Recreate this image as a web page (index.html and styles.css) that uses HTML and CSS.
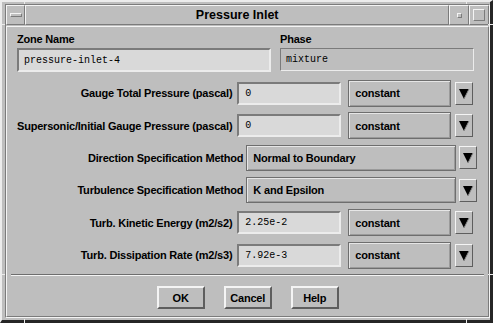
FILE: index.html
```html
<!DOCTYPE html>
<html lang="en">

<head>
    <meta charset="UTF-8">
    <title>Pressure Inlet</title>
    <link rel="stylesheet" href="styles.css">
</head>

<body>
    <div class="window">
        <span class="tick tick-top-l"></span>
        <span class="tick tick-top-r"></span>
        <span class="tick tick-bot-l"></span>
        <span class="tick tick-bot-r"></span>
        <span class="tick tick-left-t"></span>
        <span class="tick tick-left-b"></span>
        <span class="tick tick-right-t"></span>
        <span class="tick tick-right-b"></span>
        <div class="frame">
            <div class="titlebar">
                <div class="tb-btn menu-btn"><span class="menu-bar"></span></div>
                <div class="title">Pressure Inlet</div>
                <div class="tb-btn min-btn"><span class="min-box"></span></div>
                <div class="tb-btn max-btn"><span class="max-box"></span></div>
            </div>
            <div class="client">
                <div class="top-fields">
                    <div class="field zone">
                        <div class="field-label">Zone Name</div>
                        <div class="entry">pressure-inlet-4</div>
                    </div>
                    <div class="field phase">
                        <div class="field-label">Phase</div>
                        <div class="entry flat">mixture</div>
                    </div>
                </div>

                <div class="rows">
                    <div class="row">
                        <span class="row-label">Gauge Total Pressure (pascal)</span>
                        <div class="entry num">0</div>
                        <div class="option">constant</div>
                        <div class="arrow-btn"><svg width="18" height="23" viewBox="0 0 18 23"><polygon points="4,7 14,7 9,17" fill="#000"/><polyline points="14,7 9,17" stroke="#8a8a8a" fill="none"/></svg></div>
                    </div>
                    <div class="row">
                        <span class="row-label">Supersonic/Initial Gauge Pressure (pascal)</span>
                        <div class="entry num">0</div>
                        <div class="option">constant</div>
                        <div class="arrow-btn"><svg width="18" height="23" viewBox="0 0 18 23"><polygon points="4,7 14,7 9,17" fill="#000"/><polyline points="14,7 9,17" stroke="#8a8a8a" fill="none"/></svg></div>
                    </div>
                    <div class="row method">
                        <span class="row-label">Direction Specification Method</span>
                        <div class="option wide">Normal to Boundary</div>
                        <div class="arrow-btn"><svg width="18" height="23" viewBox="0 0 18 23"><polygon points="4,7 14,7 9,17" fill="#000"/><polyline points="14,7 9,17" stroke="#8a8a8a" fill="none"/></svg></div>
                    </div>
                    <div class="row method">
                        <span class="row-label">Turbulence Specification Method</span>
                        <div class="option wide">K and Epsilon</div>
                        <div class="arrow-btn"><svg width="18" height="23" viewBox="0 0 18 23"><polygon points="4,7 14,7 9,17" fill="#000"/><polyline points="14,7 9,17" stroke="#8a8a8a" fill="none"/></svg></div>
                    </div>
                    <div class="row">
                        <span class="row-label">Turb. Kinetic Energy (m2/s2)</span>
                        <div class="entry num">2.25e-2</div>
                        <div class="option">constant</div>
                        <div class="arrow-btn"><svg width="18" height="23" viewBox="0 0 18 23"><polygon points="4,7 14,7 9,17" fill="#000"/><polyline points="14,7 9,17" stroke="#8a8a8a" fill="none"/></svg></div>
                    </div>
                    <div class="row">
                        <span class="row-label">Turb. Dissipation Rate (m2/s3)</span>
                        <div class="entry num">7.92e-3</div>
                        <div class="option">constant</div>
                        <div class="arrow-btn"><svg width="18" height="23" viewBox="0 0 18 23"><polygon points="4,7 14,7 9,17" fill="#000"/><polyline points="14,7 9,17" stroke="#8a8a8a" fill="none"/></svg></div>
                    </div>
                </div>

                <div class="separator"></div>

                <div class="buttons">
                    <button class="push">OK</button>
                    <button class="push">Cancel</button>
                    <button class="push">Help</button>
                </div>
            </div>
        </div>
    </div>
</body>

</html>
```

FILE: styles.css
```css
body {
    margin: 0;
    font-family: "Liberation Sans", Arial, sans-serif;
    background-color: #bebebe;
}

.window {
    position: relative;
    box-sizing: border-box;
    width: 493px;
    height: 323px;
    background-color: #bebebe;
    border-top: 2px solid #ececec;
    border-left: 2px solid #ececec;
    border-right: 3px solid #262626;
    border-bottom: 3px solid #262626;
    padding: 2px 2px 2px 3px;
    display: flex;
}

/* resize corner marks on the frame */
.tick {
    position: absolute;
    background-color: #ececec;
}

.tick-top-l, .tick-top-r, .tick-bot-l, .tick-bot-r {
    width: 1px;
    height: 4px;
}

.tick-left-t, .tick-left-b, .tick-right-t, .tick-right-b {
    width: 5px;
    height: 1px;
}

.tick-top-l { top: -2px; left: 22px; }
.tick-top-r { top: -2px; left: 464px; }
.tick-bot-l { bottom: -3px; left: 22px; }
.tick-bot-r { bottom: -3px; left: 464px; }
.tick-left-t { left: -2px; top: 22px; }
.tick-left-b { left: -2px; top: 272px; }
.tick-right-t { right: -3px; top: 22px; }
.tick-right-b { right: -3px; top: 272px; }

.frame {
    flex: 1;
    display: flex;
    flex-direction: column;
    border: 1px solid;
    border-color: #7b7b7b #f4f4f4 #f4f4f4 #7b7b7b;
}

.titlebar {
    display: flex;
    height: 20px;
}

.tb-btn,
.title {
    box-sizing: border-box;
    border: 1px solid;
    border-color: #f4f4f4 #7b7b7b #7b7b7b #f4f4f4;
    display: flex;
    align-items: center;
    justify-content: center;
}

.menu-btn {
    width: 19px;
}

.menu-bar {
    width: 10px;
    height: 2px;
    border: 1px solid;
    border-color: #f4f4f4 #7b7b7b #7b7b7b #f4f4f4;
}

.title {
    flex: 1;
    font-weight: bold;
    font-size: 12.5px;
    color: #000;
}

.min-btn,
.max-btn {
    width: 20px;
}

.min-box {
    width: 3px;
    height: 3px;
    border: 1px solid;
    border-color: #f4f4f4 #7b7b7b #7b7b7b #f4f4f4;
}

.max-box {
    width: 10px;
    height: 10px;
    border: 1px solid;
    border-color: #f4f4f4 #7b7b7b #7b7b7b #f4f4f4;
}

.client {
    flex: 1;
    margin-top: 1px;
    border: 1px solid;
    border-color: #f4f4f4 #7b7b7b #7b7b7b #f4f4f4;
    display: flex;
    flex-direction: column;
    padding: 6px 0 0 10px;
}

.top-fields {
    display: flex;
    gap: 9px;
}

.field-label {
    font-weight: bold;
    font-size: 11px;
    letter-spacing: -0.2px;
    height: 15px;
    line-height: 13px;
}

.zone {
    width: 254px;
}

.phase {
    width: 194px;
}

.entry {
    box-sizing: border-box;
    height: 24px;
    background-color: #d9d9d9;
    border: 2px solid;
    border-color: #7b7b7b #ececec #ececec #7b7b7b;
    font-family: "Liberation Mono", "DejaVu Sans Mono", monospace;
    font-size: 10px;
    color: #000;
    padding-left: 5px;
    display: flex;
    align-items: center;
}

.entry.flat {
    background-color: #bebebe;
    border-width: 1px;
    height: 23px;
}

.rows {
    margin-top: 5px;
    display: flex;
    flex-direction: column;
}

.row {
    height: 32.4px;
    display: flex;
    align-items: center;
    padding-right: 15px;
}

.row.method {
    padding-right: 11px;
}

.row-label {
    flex: 1;
    text-align: right;
    white-space: nowrap;
    font-weight: bold;
    font-size: 11px;
    letter-spacing: -0.2px;
    padding-right: 5px;
}

.row.method .row-label {
    padding-right: 3px;
}

.entry.num {
    width: 104px;
    height: 23px;
    padding-left: 6px;
}

.option {
    box-sizing: border-box;
    width: 103px;
    height: 27px;
    margin-left: 7px;
    border: 1px solid #6e6e6e;
    box-shadow: inset 1px 1px 0 #e6e6e6, inset -1px -1px 0 #9a9a9a;
    font-weight: bold;
    font-size: 11px;
    letter-spacing: -0.2px;
    padding-left: 6px;
    display: flex;
    align-items: center;
}

.option.wide {
    width: 210px;
    height: 26px;
    margin-left: 0;
}

.arrow-btn {
    box-sizing: border-box;
    width: 18px;
    height: 23px;
    margin-left: 4px;
    border: 1px solid;
    border-color: #f4f4f4 #5e5e5e #5e5e5e #f4f4f4;
    display: flex;
    align-items: center;
    justify-content: center;
}

.row.method .arrow-btn {
    margin-left: 3px;
}

.arrow-btn svg {
    margin: -1px;
}

.separator {
    margin-top: 3px;
    margin-left: -6px;
    margin-right: 4px;
    height: 0;
    border-top: 1px solid #6e6e6e;
    border-bottom: 1px solid #f4f4f4;
}

.buttons {
    display: flex;
    justify-content: center;
    gap: 19px;
    padding-top: 10px;
    padding-right: 10px;
}

.push {
    box-sizing: border-box;
    width: 48px;
    height: 23px;
    background-color: #bebebe;
    border: 2px solid;
    border-color: #f4f4f4 #5e5e5e #5e5e5e #f4f4f4;
    font-family: "Liberation Sans", Arial, sans-serif;
    font-weight: bold;
    font-size: 11px;
    letter-spacing: -0.2px;
    color: #000;
    padding: 0;
}
```
